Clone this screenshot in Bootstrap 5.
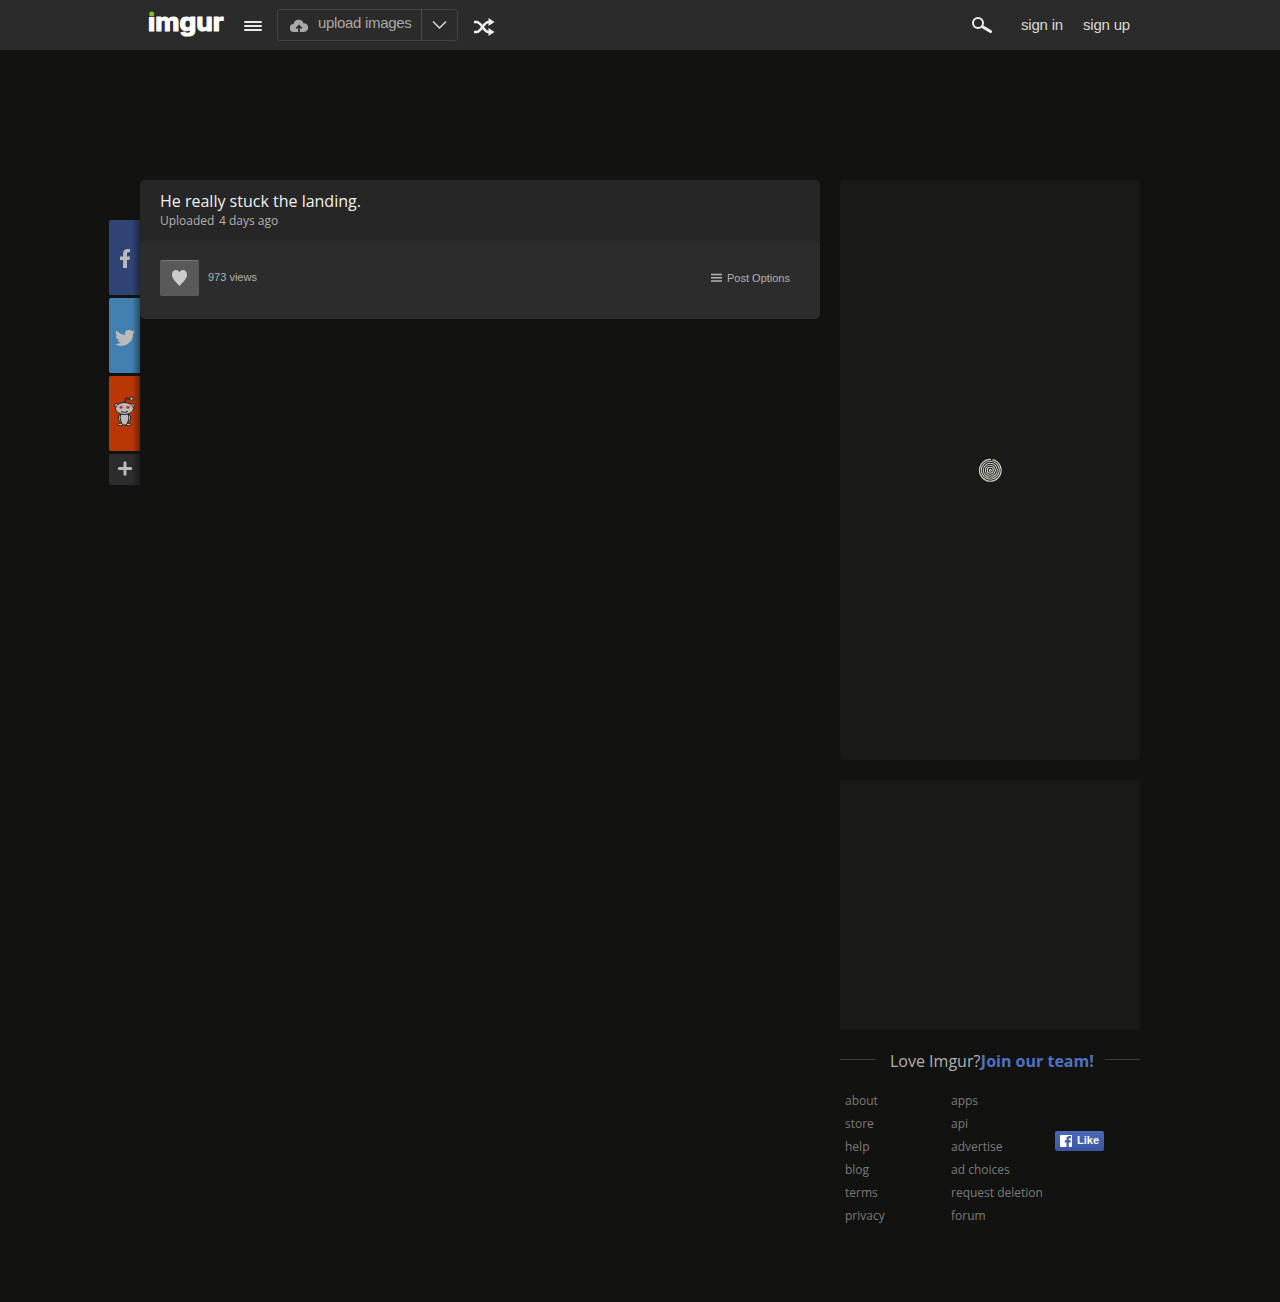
<!DOCTYPE html>
<html lang="en">
<head>
<meta charset="utf-8">
<title>He really stuck the landing. - Imgur</title>
<meta name="viewport" content="width=device-width, initial-scale=1">
<link href="https://cdn.jsdelivr.net/npm/bootstrap@5.3.0/dist/css/bootstrap.min.css" rel="stylesheet">
<style>
body{background:#121211;color:#b2b2b0;font-family:"Open Sans",sans-serif;font-size:12px;min-height:1302px}
a{text-decoration:none;color:inherit}
svg{display:block;flex:none}
.sans{font-family:"Liberation Sans",Arial,sans-serif}
.topbar{height:50px;background:#2b2b2b}
.wrap{width:1000px}
.logo{margin:0 17px 0 7px}
.upload{width:181px;height:32px;margin:9px 14px 0 13px;border:1px solid #444442;border-radius:3px;font-size:15px;color:#a9a9a7}
.upload-main{width:144px;padding-left:12px;border-right:1px solid #4a4a48;line-height:26px;letter-spacing:-.32px}
.signs{font-size:15px;color:#ddddd1;line-height:50px;gap:20px;padding:0 10px 0 27px;letter-spacing:-.2px}
.page{width:1031px;margin-left:109px;margin-top:130px}
.share{width:31px;padding-top:40px;gap:3px}
.share a{height:75px;border-radius:2px 0 0 2px;background-image:linear-gradient(90deg,transparent 75%,rgba(0,0,0,.4))}
.fb{background-color:#2f4374}.tw{background-color:#407fae}.rd{background-color:#b93605}
.share .more{height:31px;background-color:#2c2c2c}
.post{width:680px;height:139px;border-radius:5px;background:#2c2c2c;overflow:hidden}
.post-head{height:61px;background:#262626;padding:11px 20px 0;box-shadow:0 1px 1px #292929}
.post-head h1{font-size:16px;line-height:21px;font-weight:400;color:#f2f2f0;margin:0}
.post-meta{line-height:18px;gap:4.5px}
.stats{font-size:11px;padding:19px 30px 0 20px}
.heart{width:39px;height:36px;background:#595959;border-top:1px solid #777;border-radius:2px;margin-right:9px}
.views{padding-top:9px}
.options{padding-top:10px}
.side{width:300px;margin-left:20px}
.gallery{height:580px;background:#191917;border-radius:4px}
.advert{height:250px;background:#191917;margin-top:20px}
.team{height:21px;margin-top:20px;font-size:16px;line-height:23px}
.team i{width:35px;height:1px;background:#3c3c3a;margin-top:9px}
.team span{margin-left:15px}
.team b{color:#4f72c4;font-weight:700;margin-left:.5px}
.links{padding-left:5px;margin-top:18px;line-height:23px;color:#7b7b79}
.links .first{width:106px}.links .second{width:104px}
.like{width:49px;height:20px;margin-top:42px;border-radius:2px;background:linear-gradient(#4c69ba,#3b55a0);color:#fff;font-size:11px;font-weight:700;line-height:19px;padding-left:5px}
</style>
<script src="https://cdn.jsdelivr.net/npm/bootstrap@5.3.0/dist/js/bootstrap.bundle.min.js"></script>
</head>
<body>
<header class="topbar sans">
 <div class="wrap mx-auto d-flex">
  <a class="logo" href="#"><svg width="80" height="50" viewBox="147 0 80 50"><text x="148" y="31" textLength="75.500" lengthAdjust="spacingAndGlyphs" font-family="Inter" font-weight="700" font-size="24.500" fill="#fff" stroke="#fff" stroke-width="1.200" stroke-linejoin="round">imgur</text><path d="M147 6h8.500v11H147z" fill="#2b2b2b"/><circle cx="151.700" cy="14" r="2.500" fill="#85bf25"/></svg></a>
  <svg width="20" height="50" viewBox="244 0 20 50"><path d="M245 22h16M245 26h16M245 30h16" stroke="#ece9e9" stroke-width="2" stroke-linecap="round"/></svg>
  <div class="upload d-flex">
   <a class="upload-main d-flex" href="#"><svg width="28" height="30" viewBox="290 10 28 30"><path d="M294 32a4 4 0 0 1-.5-8c.5-5 8.500-5.800 10-.8a4.400 4.400 0 0 1 .5 8.800z" fill="#a9a9a9"/><path d="M299 32v-6m-2.700 2.400 2.700-2.700 2.700 2.700" fill="none" stroke="#2b2b2b" stroke-width="1.700"/></svg><span>upload images</span></a>
   <a href="#"><svg width="35" height="30" viewBox="422 10 35 30"><path d="m433 21.500 6.500 6.500 6.500-6.500" fill="none" stroke="#ddddd1" stroke-width="1.500"/></svg></a>
  </div>
  <svg width="24" height="50" viewBox="472 0 24 50"><path d="M474 22h2.500c5 0 7 10 12 10h2M474 32h2.500c5 0 7-10 12-10h2" fill="none" stroke="#eee" stroke-width="2.500"/><path d="m488.500 18 6 4-6 4zm0 10 6 4-6 4z" fill="#eee"/></svg>
  <svg class="ms-auto" width="24" height="50" viewBox="970 0 24 50"><circle cx="978" cy="23" r="5" fill="none" stroke="#eee" stroke-width="2"/><path d="m983 27 7.500 4.500" stroke="#eee" stroke-width="3.200" stroke-linecap="round"/></svg>
  <div class="signs d-flex"><a href="#">sign in</a><a href="#">sign up</a></div>
 </div>
</header>
<main class="page d-flex align-items-start">
 <nav class="share d-flex flex-column">
  <a class="fb" href="#"><svg width="31" height="75"><path d="M14.100 48V40H11v-3.600h3.100V34c0-4 2-5.500 6.900-5V32.300c-2.500-.2-3 .2-3 1.900v2.200h3L20.500 40H18v8z" fill="#bababa"/></svg></a>
  <a class="tw" href="#"><svg width="31" height="75"><path transform="translate(6 30) scale(.84 .82)" d="M24 4.600a9.900 9.900 0 0 1-2.800.8 4.900 4.900 0 0 0 2.200-2.700c-1 .6-2 1-3.100 1.200a4.900 4.900 0 0 0-8.400 4.500A14 14 0 0 1 1.700 3.100a4.900 4.900 0 0 0 1.500 6.600 4.900 4.900 0 0 1-2.200-.6 4.900 4.900 0 0 0 3.900 4.900 4.900 4.900 0 0 1-2.200.1 4.900 4.900 0 0 0 4.600 3.400A9.900 9.900 0 0 1 0 19.500a14 14 0 0 0 21.500-12.400A10 10 0 0 0 24 4.600z" fill="#bababa"/></svg></a>
  <a class="rd" href="#"><svg width="31" height="75"><g fill="#bababa" stroke="#292020" stroke-width="1"><path d="M15.500 27l1.500-5 4 1" fill="none" stroke-width="1.300"/><circle cx="22.500" cy="22.700" r="1.700"/><circle cx="7.500" cy="29.500" r="2"/><circle cx="23.500" cy="29.500" r="2"/><ellipse cx="11.500" cy="48.500" rx="2.500" ry="1.200"/><ellipse cx="19.500" cy="48.500" rx="2.500" ry="1.200"/><ellipse cx="11" cy="42" rx="1.800" ry="3.200"/><ellipse cx="20" cy="42" rx="1.800" ry="3.200"/><path d="M11.500 38h8c1 5-.5 9-2.500 11h-3c-2-2-3.500-6-2.500-11z"/><ellipse cx="15.500" cy="32.500" rx="9" ry="6"/><path d="M12 35.500q3.500 1.800 7 0" fill="none"/></g><circle cx="12" cy="31.300" r="1.500" fill="#c92f16"/><circle cx="19" cy="31.300" r="1.500" fill="#c92f16"/></svg></a>
  <a class="more" href="#"><svg width="31" height="31"><path d="M10.300 14.500h11.400M16 8.700v11.600" stroke="#bababa" stroke-width="3" stroke-linecap="round"/></svg></a>
 </nav>
 <article class="post">
  <div class="post-head"><h1>He really stuck the landing.</h1><div class="post-meta d-flex"><span>Uploaded</span><span>4 days ago</span></div></div>
  <div class="stats sans d-flex"><a class="heart d-flex justify-content-center" href="#"><svg width="17" height="35" viewBox="171 261 17 35"><path d="M179.500 286c-3-3.500-7.500-7-7.500-11.500 0-5 5.500-6 7.500-2.300 2-3.700 7.500-2.700 7.500 2.300 0 4.500-4.500 8-7.500 11.500z" fill="#ccc"/></svg></a><span class="views">973 views</span>
   <a class="ms-auto d-flex" href="#"><svg width="16" height="36" viewBox="711 260 16 36"><path d="M711 274.500h11M711 277.800h11M711 281h11" stroke="#b2b2b2" stroke-width="1.500"/></svg><span class="options">Post Options</span></a></div>
 </article>
 <aside class="side">
  <div class="gallery d-flex justify-content-center align-items-center"><svg width="24" height="24" viewBox="0 0 24 24"><g fill="none" stroke="#cfcfc5" stroke-width="1.100"><circle cx="12.300" cy="12.300" r="10.900"/><circle cx="12.300" cy="12.300" r="9"/><circle cx="12.300" cy="12.300" r="7"/><circle cx="12.300" cy="12.300" r="5"/><circle cx="12.300" cy="12.300" r="3"/><circle cx="12.300" cy="12.300" r="1"/></g><path d="M13 0h1.500v2.500H13z" fill="#191917"/></svg></div>
  <div class="advert"></div>
  <div class="team d-flex"><i></i><span>Love Imgur?</span><a href="#"><b>Join our team!</b></a><i class="ms-auto"></i></div>
  <div class="links d-flex align-items-start">
   <div class="first d-flex flex-column"><a href="#">about</a><a href="#">store</a><a href="#">help</a><a href="#">blog</a><a href="#">terms</a><a href="#">privacy</a></div>
   <div class="second d-flex flex-column"><a href="#">apps</a><a href="#">api</a><a href="#">advertise</a><a href="#">ad choices</a><a href="#">request deletion</a><a href="#">forum</a></div>
   <a class="like sans d-flex" href="#"><svg width="17" height="20"><rect y="4" width="12" height="12" rx="1" fill="#fff"/><path d="M6.500 16v-4.500H4.800V9.300h1.700V8c0-2.300 1.300-3.200 4.500-2.800v2C9.300 7.100 8.800 7.300 8.800 8.300v1h2.100l-.3 2.200H8.800V16z" fill="#435fae"/></svg>Like</a>
  </div>
 </aside>
</main>
</body>
</html>
